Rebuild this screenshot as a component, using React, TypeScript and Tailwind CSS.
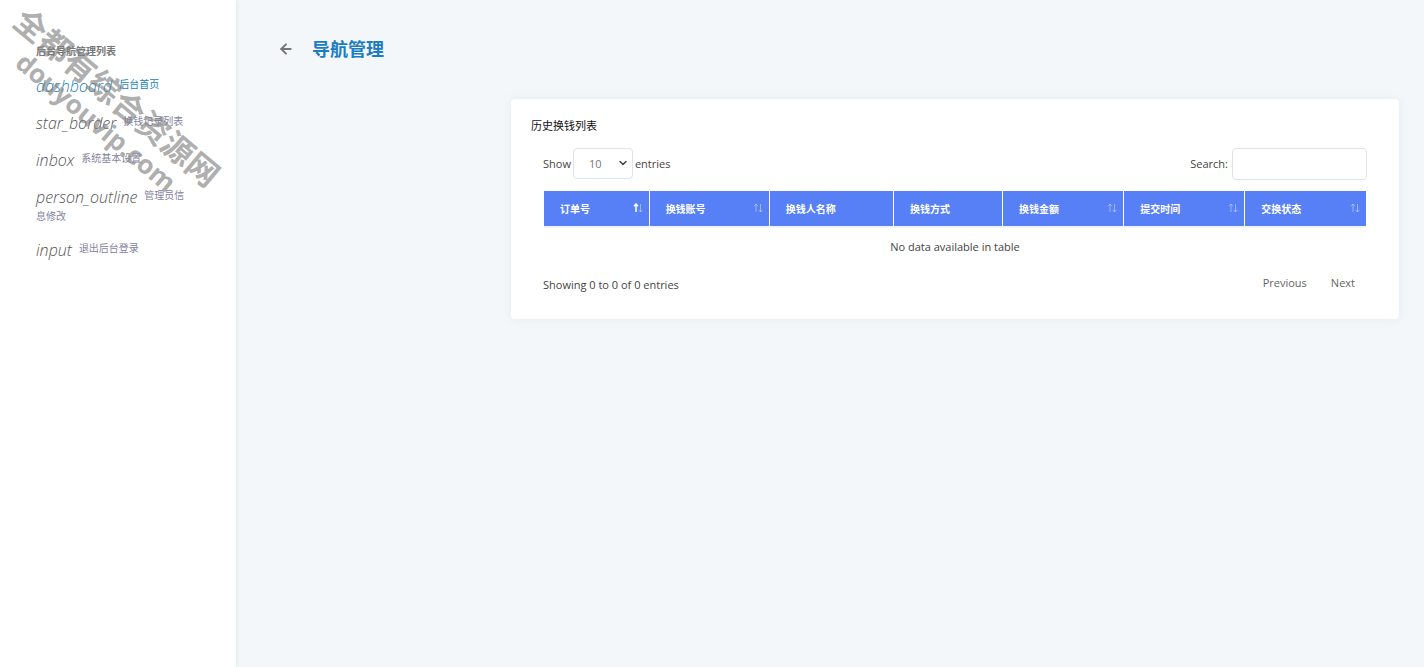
import { ArrowLeft, ChevronDown } from 'lucide-react';

const navItems = [
    { icon: 'dashboard', label: '后台首页', active: true },
    { icon: 'star_border', label: '换钱记录列表' },
    { icon: 'inbox', label: '系统基本设置' },
    { icon: 'person_outline', label: '管理员信息修改' },
    { icon: 'input', label: '退出后台登录' },
];

const columns = [
    { title: '订单号', width: 'w-[105px]', sort: 'asc' },
    { title: '换钱账号', width: 'w-[120px]', sort: 'both' },
    { title: '换钱人名称', width: 'w-[124px]', sort: 'none' },
    { title: '换钱方式', width: 'w-[109px]', sort: 'none' },
    { title: '换钱金额', width: 'w-[121px]', sort: 'both' },
    { title: '提交时间', width: 'w-[121px]', sort: 'both' },
    { title: '交换状态', width: 'w-[121px]', sort: 'both' },
];

function SortIcon({ sort }: { sort: string }) {
    return (
        <svg viewBox="0 0 10 10" className="mb-[2px] h-[10px] w-[10px]" fill="none" stroke="white" aria-hidden="true">
            <path d="M3 9V1M1 3.2L3 1L5 3.2" strokeWidth={sort === 'asc' ? 1.5 : 1} opacity={sort === 'asc' ? 1 : 0.4} />
            <path d="M7.5 1V9M5.5 6.8L7.5 9L9.5 6.8" opacity="0.4" />
        </svg>
    );
}

function Sidebar() {
    return (
        <aside className="w-[236px] shrink-0 bg-white pl-9 pr-12 pt-[43px] shadow-[0_0_4px_rgba(0,0,0,0.1)]">
            <h3 className="text-[10px] font-bold leading-4 text-[#777]">后台导航管理列表</h3>
            <nav className="mt-4 flex flex-col gap-[15px]">
                {navItems.map((item) => (
                    <a
                        key={item.icon}
                        href="#"
                        className={`block text-[10px] leading-4 ${item.active ? 'text-[#1c7fb5]' : 'text-[#8583a0]'}`}
                    >
                        <i className={`mr-[7px] align-[-4px] font-['Open_Sans','Noto_Sans',sans-serif] text-base font-light italic leading-[22px] ${item.active ? 'text-[#1c7fb5]' : 'text-[#555]'}`}>
                            {item.icon}
                        </i>
                        {item.label}
                    </a>
                ))}
            </nav>
        </aside>
    );
}

function Watermark() {
    return (
        <div className="pointer-events-none absolute left-[-22px] top-[76px] w-[260px] rotate-[40deg] text-center font-bold text-[#808080]/65">
            <p className="text-[32px] leading-9">全都有综合资源网</p>
            <p className="text-[26px] leading-7">douyouvip.com</p>
        </div>
    );
}

function HistoryCard() {
    return (
        <section className="ml-[251px] rounded-sm bg-white px-5 pb-[26px] pt-[19px] shadow-[0_0_10px_rgba(150,170,190,0.15)]">
            <h2 className="text-[11px] leading-4 text-[#111]">历史换钱列表</h2>
            <div className="px-3">
                <div className="mt-[14px] flex items-start justify-between">
                    <label className="flex items-center gap-[2px]">
                        Show
                        <span className="relative">
                            <select className="block h-[31px] w-[60px] appearance-none rounded-sm border border-[#dfe3ea] bg-white pl-[15px] text-[11px] text-[#777]">
                                <option>10</option>
                            </select>
                            <ChevronDown className="pointer-events-none absolute right-1 top-[9px] h-3 w-3 text-[#444]" strokeWidth={3} />
                        </span>
                        entries
                    </label>
                    <label className="flex items-center gap-1">
                        Search:
                        <input type="search" className="h-8 w-[135px] rounded-sm border border-[#dfe3ea] bg-white px-2" />
                    </label>
                </div>
                <div className="mt-[11px] px-px">
                    <table className="w-full table-fixed border-collapse">
                        <thead>
                            <tr className="h-9 bg-[#5780f7] text-left text-[10px] text-white">
                                {columns.map((col) => (
                                    <th key={col.title} className={`${col.width} border-r border-white pl-4 pr-[6px] font-bold last:border-r-0`}>
                                        <div className="flex items-center justify-between">
                                            {col.title}
                                            {col.sort !== 'none' && <SortIcon sort={col.sort} />}
                                        </div>
                                    </th>
                                ))}
                            </tr>
                        </thead>
                        <tbody>
                            <tr className="h-[38px] border-t-2 border-[#f0f4fa]">
                                <td colSpan={7} className="text-center">No data available in table</td>
                            </tr>
                        </tbody>
                    </table>
                </div>
                <div className="mt-2 flex items-center justify-between">
                    <p className="pt-1">Showing 0 to 0 of 0 entries</p>
                    <div className="flex gap-6 pr-3 text-[#666]">
                        <button type="button">Previous</button>
                        <button type="button">Next</button>
                    </div>
                </div>
            </div>
        </section>
    );
}

export default function App() {
    return (
        <div className="relative flex min-h-screen overflow-hidden bg-[#f3f7fa] font-['Open_Sans','Noto_Sans_CJK_SC',sans-serif] text-[11px] leading-4 text-[#444]">
            <Sidebar />
            <main className="min-w-0 flex-1 pl-6 pr-[25px] pt-[37px]">
                <header className="flex items-center gap-[18px] pl-[18px]">
                    <a href="#" aria-label="返回">
                        <ArrowLeft className="h-4 w-4 text-[#777]" strokeWidth={3} />
                    </a>
                    <h1 className="text-lg font-bold leading-6 text-[#1b7dc0]">导航管理</h1>
                </header>
                <div className="mt-[38px]">
                    <HistoryCard />
                </div>
            </main>
            <Watermark />
        </div>
    );
}
